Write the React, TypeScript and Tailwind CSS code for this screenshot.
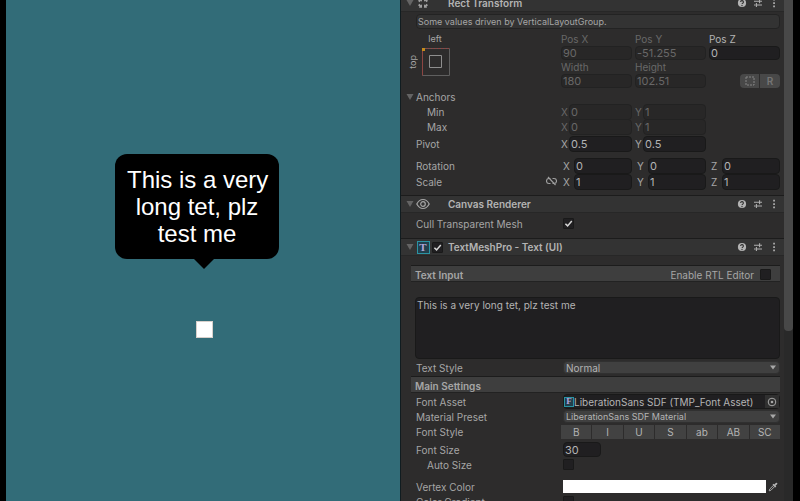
import type { ReactNode } from "react";

const INK = "text-[#a6a6a6]";
const DIM = "text-[#686868]";

function Foldout() {
  return (
    <svg viewBox="0 0 8 8" className="h-2 w-2 shrink-0" aria-hidden="true">
      <path d="M0.5 1h7L4 7z" fill="#646464" />
    </svg>
  );
}

function HelpIcon() {
  return (
    <svg viewBox="0 0 10 10" className="h-2.5 w-2.5" aria-hidden="true">
      <circle cx="5" cy="5" r="4.1" fill="#b4b4b4" />
      <path d="M3.6 4a1.4 1.4 0 1 1 2.1 1.2c-.5.3-.7.5-.7.9" fill="none" stroke="#333" strokeWidth="1.1" />
      <circle cx="5" cy="7.5" r=".65" fill="#333" />
    </svg>
  );
}

function PresetIcon() {
  return (
    <svg viewBox="0 0 10 10" className="h-2.5 w-2.5" fill="none" stroke="#b0b0b0" strokeWidth="1.1" aria-hidden="true">
      <path d="M1 3.2h5.2M7.2 3.2H9M6.6 1.2v4M1 7h1.6M4 7h5M3.4 5v4" />
    </svg>
  );
}

function MenuIcon() {
  return (
    <svg viewBox="0 0 10 10" className="h-2.5 w-2.5" fill="#b0b0b0" aria-hidden="true">
      <path d="M4.2.8h1.7v1.7H4.2zM4.2 4.2h1.7v1.7H4.2zM4.2 7.6h1.7v1.7H4.2z" />
    </svg>
  );
}

function RectIcon() {
  return (
    <svg viewBox="0 0 12 12" className="h-3 w-3" fill="#a0a0a0" aria-hidden="true">
      <path d="M2 1.2h3v3.6L3.9 3.7 2.4 5.2 1 3.8l1.5-1.4zM10 1.2H7v3.6l1.1-1.1 1.5 1.5L11 3.8 9.5 2.4zM2 10.8h3V7.2L3.9 8.3 2.4 6.8 1 8.2l1.5 1.4zM10 10.8H7V7.2l1.1 1.1 1.5-1.5L11 8.2 9.5 9.6z" />
    </svg>
  );
}

function EyeIcon() {
  return (
    <svg viewBox="0 0 14 12" className="h-3 w-3.5" fill="none" stroke="#a6a6a6" strokeWidth="1.2" aria-hidden="true">
      <path d="M.8 6C2.4 2.9 4.4 1.5 7 1.5s4.6 1.4 6.2 4.5c-1.6 3.1-3.6 4.5-6.2 4.5S2.4 9.1.8 6z" />
      <circle cx="7" cy="6" r="2.3" />
    </svg>
  );
}

function AssetIcon({ letter, size }: { letter: string; size: string }) {
  return (
    <span
      className={`flex shrink-0 items-center justify-center border border-[#2a93a3] bg-[#223f4c] font-['Liberation_Serif',serif] font-bold leading-none text-[#b3a6dc] ${size}`}
    >
      {letter}
    </span>
  );
}

function Check({ label, checked = false }: { label: string; checked?: boolean }) {
  return (
    <span className="relative flex h-[11px] w-[11px] shrink-0">
      <input
        type="checkbox"
        aria-label={label}
        defaultChecked={checked}
        className="peer h-full w-full appearance-none rounded-[1px] border border-[#191919] bg-[#201f21]"
      />
      <svg
        viewBox="0 0 11 11"
        className="pointer-events-none absolute inset-0 hidden peer-checked:block"
        fill="none"
        stroke="#d6d6d6"
        strokeWidth="1.5"
        aria-hidden="true"
      >
        <path d="M2.4 5.7l2.2 2.2 4.2-5" />
      </svg>
    </span>
  );
}

function Header({ icon, title, toggle }: { icon: ReactNode; title: string; toggle?: ReactNode }) {
  return (
    <header className="flex h-[18px] items-center border-y border-t-[#1c1c1c] border-b-[#272727] bg-[#333333] pl-[5px] pr-[5px]">
      <Foldout />
      <span className="ml-0.5 flex w-3.5 justify-center">{icon}</span>
      <span className="ml-0.5 flex w-4">{toggle}</span>
      <h2 className="flex-1 font-semibold text-[#b4b4b4]">{title}</h2>
      <div className="flex gap-1.5">
        <button aria-label="Help"><HelpIcon /></button>
        <button aria-label="Presets"><PresetIcon /></button>
        <button aria-label="More options"><MenuIcon /></button>
      </div>
    </header>
  );
}

function Field({ label, value, disabled = false }: { label: string; value: string; disabled?: boolean }) {
  return (
    <input
      aria-label={label}
      defaultValue={value}
      disabled={disabled}
      className={`h-full w-full min-w-0 flex-1 rounded-sm border px-px text-[11px] ${
        disabled ? "border-[#222222] bg-[#282727] text-[#686868]" : "border-[#191919] bg-[#201f21] text-[#b4b4b4]"
      }`}
    />
  );
}

function Labelled({ label, value, disabled = false }: { label: string; value: string; disabled?: boolean }) {
  return (
    <label className="block">
      <span className={`flex h-3.5 items-center ${disabled ? DIM : "text-[#b4b4b4]"}`}>{label}</span>
      <span className="flex h-3.5">
        <Field label={label} value={value} disabled={disabled} />
      </span>
    </label>
  );
}

function Row({ label, indent = false, children }: { label: string; indent?: boolean; children?: ReactNode }) {
  return (
    <div className="flex h-[15px] items-center">
      <span className={`w-[145px] shrink-0 ${indent ? "pl-[11px]" : ""}`}>{label}</span>
      {children}
    </div>
  );
}

function Axes({ name, values, disabled = false, wide = false }: { name: string; values: string[]; disabled?: boolean; wide?: boolean }) {
  const axes = ["X", "Y", "Z"];
  return (
    <div className="grid h-full flex-1 grid-cols-3 gap-[3px]">
      {values.map((value, i) => (
        <label key={axes[i]} className="flex h-full items-center">
          <span className={`shrink-0 ${wide ? "w-[13px] pl-0.5" : "w-2"} ${disabled ? DIM : INK}`}>{axes[i]}</span>
          <Field label={`${name} ${axes[i]}`} value={value} disabled={disabled} />
        </label>
      ))}
    </div>
  );
}

function Dropdown({ label, value, small = false }: { label: string; value: string; small?: boolean }) {
  return (
    <div className="relative ml-0.5 h-[13px] flex-1">
      <select
        aria-label={label}
        className={`block h-full w-full appearance-none rounded-sm border border-[#303030] bg-[#404040] px-0.5 leading-none text-[#b4b4b4] ${
          small ? "text-[9px]" : "text-[10px]"
        }`}
      >
        <option>{value}</option>
      </select>
      <svg viewBox="0 0 8 5" className="pointer-events-none absolute right-[3px] top-1 h-[5px] w-2" aria-hidden="true">
        <path d="M1 .5h6L4 4.5z" fill="#a8a8a8" />
      </svg>
    </div>
  );
}

function GameView() {
  return (
    <main className="relative w-1/2 shrink-0 overflow-hidden border-l-[6px] border-black bg-[#326c78]">
      <div className="absolute left-[109px] top-[154px] rounded-xl bg-black px-3 py-3">
        <p className="w-[140px] whitespace-nowrap text-center font-['Liberation_Sans',Arial,sans-serif] text-2xl leading-[27px] text-white">
          This is a very
          <br />
          long tet, plz
          <br />
          test me
        </p>
        <svg viewBox="0 0 20 10" className="absolute left-[79px] top-full h-2.5 w-5" aria-hidden="true">
          <path d="M0 0h20L10 10z" fill="#000" />
        </svg>
      </div>
      <div className="absolute left-[190px] top-[321px] h-[17px] w-[17px] border border-[#d8d0cb] bg-white" />
    </main>
  );
}

function RectTransform() {
  return (
    <section>
      <Header icon={<RectIcon />} title="Rect Transform" />
      <div className="pl-[15px] pr-1">
        <p className="mt-0.5 flex h-[15px] items-center rounded-sm border border-[#232323] bg-[#333333] px-px text-[9px]">
          Some values driven by VerticalLayoutGroup.
        </p>
        <div className="mt-[3px] flex h-[57px]">
          <div className="w-[145px] shrink-0">
            <div className="flex h-4 w-9 items-start justify-center pl-0.5 pt-0.5 text-[9px]">left</div>
            <div className="-ml-2 flex items-center gap-1">
              <span className="w-2.5 rotate-180 text-center text-[9px] leading-[10px] [writing-mode:vertical-rl]">top</span>
              <button aria-label="Anchor presets">
                <svg viewBox="0 0 28 28" className="h-7 w-7" fill="none" aria-hidden="true">
                  <path d="M.5.5h27v27H.5z" stroke="#5f5f5f" />
                  <path d="M.5 1v26.5" stroke="#8c4542" />
                  <path d="M1 .5h26" stroke="#8c4542" strokeDasharray="2 1" />
                  <path d="M7.5 7.5h12v12h-12z" stroke="#8e8e8e" />
                  <path d="M0 0h3v3H0z" fill="#c58a1c" />
                </svg>
              </button>
            </div>
          </div>
          <div className="grid flex-1 grid-cols-3 content-start gap-x-[3px]">
            <Labelled label="Pos X" value="90" disabled />
            <Labelled label="Pos Y" value="-51.255" disabled />
            <Labelled label="Pos Z" value="0" />
            <Labelled label="Width" value="180" disabled />
            <Labelled label="Height" value="102.51" disabled />
            <div className="flex items-end justify-end gap-px">
              <button aria-label="Blueprint mode" className="flex h-3.5 w-[19px] items-center justify-center rounded-l-sm bg-[#484848]">
                <svg viewBox="0 0 10 10" className="h-2.5 w-2.5" aria-hidden="true">
                  <path d="M1 1h8v8H1z" fill="none" stroke="#858585" strokeDasharray="2 1" />
                </svg>
              </button>
              <button aria-label="Raw edit mode" className="flex h-3.5 w-5 items-center justify-center rounded-r-sm bg-[#484848] font-semibold text-[#757575]">
                R
              </button>
            </div>
          </div>
        </div>
        <div className="-ml-2.5 flex h-[15px] items-center gap-0.5">
          <Foldout />
          <span>Anchors</span>
        </div>
        <Row label="Min" indent><Axes name="Min" values={["0", "1"]} disabled /></Row>
        <Row label="Max" indent><Axes name="Max" values={["0", "1"]} disabled /></Row>
        <div className="mt-0.5">
          <Row label="Pivot"><Axes name="Pivot" values={["0.5", "0.5"]} /></Row>
        </div>
        <div className="mt-[7px] flex flex-col gap-px pb-1.5">
          <Row label="Rotation"><Axes name="Rotation" values={["0", "0", "0"]} wide /></Row>
          <div className="relative">
            <Row label="Scale"><Axes name="Scale" values={["1", "1", "1"]} wide /></Row>
            <button aria-label="Constrain proportions" className="absolute left-[130px] top-0.5">
              <svg viewBox="0 0 11 10" className="h-2.5 w-[11px]" fill="none" stroke="#a0a0a0" strokeWidth="1.1" aria-hidden="true">
                <path d="M4.5 2.5H3a2.3 2.3 0 0 0 0 5h1.5M6.5 2.5H8a2.3 2.3 0 0 1 0 5H6.5M2 1l7.5 8" />
              </svg>
            </button>
          </div>
        </div>
      </div>
    </section>
  );
}

function CanvasRenderer() {
  return (
    <section>
      <Header icon={<EyeIcon />} title="Canvas Renderer" />
      <div className="pb-[7px] pl-[15px] pr-1 pt-[3px]">
        <Row label="Cull Transparent Mesh">
          <span className="ml-0.5 flex"><Check label="Cull Transparent Mesh" checked /></span>
        </Row>
      </div>
    </section>
  );
}

function TextMeshPro() {
  const styles = ["B", "I", "U", "S", "ab", "AB", "SC"];
  const bar = "flex h-[17px] items-center border-y border-t-[#1c1c1c] border-b-[#222222] bg-[#3e3e3e] px-1 pt-0.5";
  return (
    <section>
      <Header
        icon={<AssetIcon letter="T" size="h-[13px] w-[13px] text-[11px]" />}
        title="TextMeshPro - Text (UI)"
        toggle={<Check label="Component enabled" checked />}
      />
      <div className="pl-2.5 pr-1 pt-[9px]">
        <div className={bar}>
          <h3 className="flex-1 font-semibold">Text Input</h3>
          <label className="flex items-center gap-1.5 pr-[5px]">
            Enable RTL Editor
            <Check label="Enable RTL Editor" />
          </label>
        </div>
        <textarea
          aria-label="Text"
          defaultValue="This is a very long tet, plz test me"
          className="ml-1 mt-[15px] block h-[62px] w-[calc(100%-4px)] resize-none rounded-sm border border-[#191919] bg-[#201f21] px-px text-[10px] leading-[15px] text-[#b4b4b4]"
        />
        <div className="mb-px mt-px pl-[5px]">
          <Row label="Text Style"><Dropdown label="Text Style" value="Normal" /></Row>
        </div>
        <div className={bar}>
          <h3 className="font-semibold">Main Settings</h3>
        </div>
        <div className="pl-[5px] pt-px">
          <Row label="Font Asset">
            <div className="ml-0.5 flex h-full flex-1 items-center whitespace-nowrap rounded-sm border border-[#191919] bg-[#201f21] text-[#b4b4b4]">
              <AssetIcon letter="F" size="h-2.5 w-2.5 text-[9px]" />
              <span className="flex-1">LiberationSans SDF (TMP_Font Asset)</span>
              <button aria-label="Pick font asset" className="flex h-full w-3.5 items-center justify-center bg-[#303030]">
                <svg viewBox="0 0 10 10" className="h-2.5 w-2.5" aria-hidden="true">
                  <circle cx="5" cy="5" r="3.8" fill="none" stroke="#a8a8a8" />
                  <circle cx="5" cy="5" r="1.3" fill="#a8a8a8" />
                </svg>
              </button>
            </div>
          </Row>
          <Row label="Material Preset"><Dropdown label="Material Preset" value="LiberationSans SDF Material" small /></Row>
          <Row label="Font Style">
            <div className="grid h-3.5 flex-1 grid-cols-7 gap-px">
              {styles.map((s) => (
                <button key={s} className="flex items-center justify-center bg-[#424242] text-[#b4b4b4]">{s}</button>
              ))}
            </div>
          </Row>
        </div>
        <div className="pl-[5px] pt-[3px]">
          <Row label="Font Size">
            <span className="ml-0.5 flex h-full w-[38px]"><Field label="Font Size" value="30" /></span>
          </Row>
          <Row label="Auto Size" indent>
            <span className="ml-0.5 flex"><Check label="Auto Size" /></span>
          </Row>
          <div className="pt-[7px]">
            <Row label="Vertex Color">
              <button aria-label="Vertex Color" className="ml-0.5 h-[13px] flex-1 bg-white" />
              <button aria-label="Pick color" className="flex h-full w-3.5 items-center justify-center">
                <svg viewBox="0 0 10 10" className="h-2.5 w-2.5" aria-hidden="true">
                  <path d="M1.2 8.8l.5-1.7 3.6-3.6 1.2 1.2-3.6 3.6z" fill="none" stroke="#a8a8a8" />
                  <path d="M4.5 2.7l1-1 .8.8L7.8 1a.9.9 0 0 1 1.3 1.3L7.5 3.7l.8.8-1 1z" fill="#b4b4b4" />
                </svg>
              </button>
            </Row>
            <Row label="Color Gradient">
              <span className="ml-0.5 flex"><Check label="Color Gradient" /></span>
            </Row>
          </div>
        </div>
      </div>
    </section>
  );
}

export default function App() {
  return (
    <div className="flex h-screen overflow-hidden bg-black font-['Inter',sans-serif] text-[10px] leading-none">
      <GameView />
      <aside className={`min-w-0 flex-1 overflow-hidden border-l border-[#101c20] bg-[#2d2c2c] ${INK}`}>
        <div className="-mt-1.5">
          <RectTransform />
          <CanvasRenderer />
          <TextMeshPro />
        </div>
      </aside>
      <div className="mr-[7px] w-[9px] shrink-0 bg-[#292929]">
        <div className="h-[66%] rounded-b bg-[#484848]" />
      </div>
    </div>
  );
}
